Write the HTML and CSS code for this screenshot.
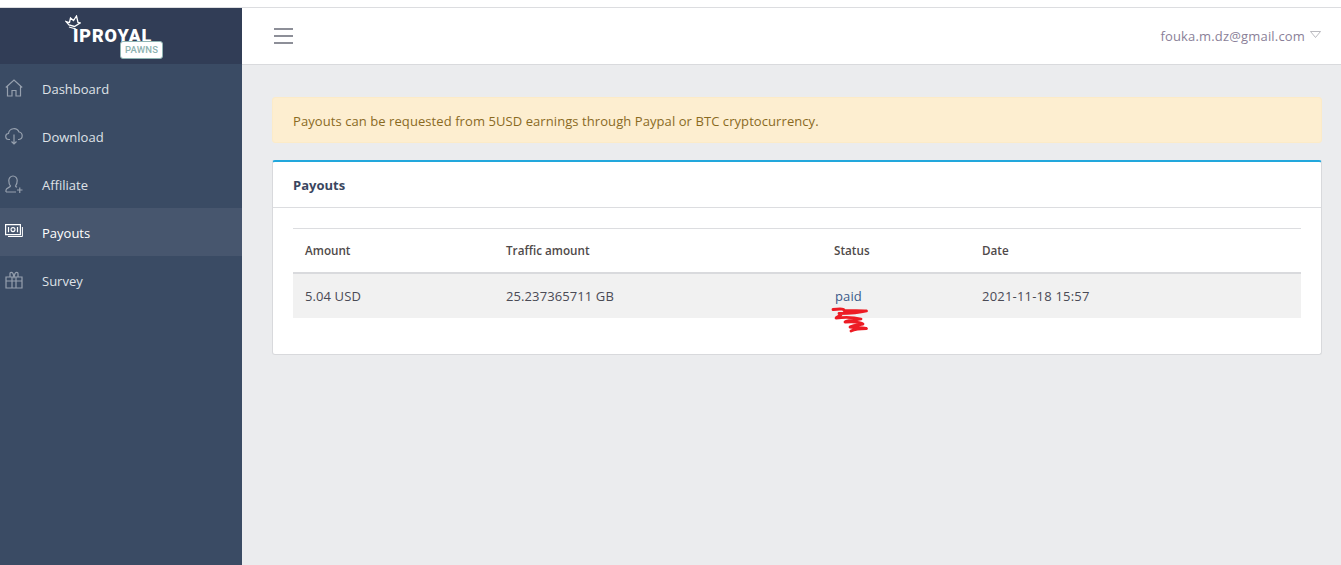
FILE: index.html
```html
<!DOCTYPE html>
<html lang="en">
<head>
<meta charset="utf-8">
<title>Payouts</title>
<link rel="stylesheet" href="styles.css">
</head>
<body>
<div class="topstrip"></div>
<div class="app">
  <aside class="sidebar">
    <div class="brand">
      <div class="logo">
        <svg class="crown" width="16" height="15" viewBox="0 0 16 15"><path d="M1 6.500 4.500 7.500 5.500 3 8.500 5.500 11.500 1 13 7.500 15 8 9.500 11.500 4 10Z" fill="none" stroke="#fff" stroke-width="1.300"/><path d="M4 12 11 14" stroke="#fff" stroke-width="1.300"/></svg>
        <span class="logotext">IPROYAL</span>
        <span class="pawns">PAWNS</span>
      </div>
    </div>
    <nav class="nav">
      <a class="navitem">
        <svg class="navicon" viewBox="0 0 18 18"><path d="M.8 8.500 9 1l8.200 7.500M2.500 7.500V17H7v-5.500h4V17h4.500V7.500" fill="none" stroke="currentColor" stroke-width="1.200"/></svg>
        <span>Dashboard</span>
      </a>
      <a class="navitem">
        <svg class="navicon" viewBox="0 0 18 18"><path d="M5 12.500H4a3 3 0 0 1-.5-6A5.500 5.500 0 0 1 14 5a3.800 3.800 0 0 1 0 7.500h-1M9 7.500v9.500M6.500 14.500 9 17l2.500-2.500" fill="none" stroke="currentColor" stroke-width="1.200"/></svg>
        <span>Download</span>
      </a>
      <a class="navitem">
        <svg class="navicon" viewBox="0 0 18 18"><path d="M1 17v-2c0-2 4-2.500 4.500-4C4 9.500 3.800 7.500 3.800 5.500 3.800 3 5.500 1 8 1s4.200 2 4.200 4.500c0 2-.5 4-1.700 5.500.2.600.8 1 1.500 1.300M1 17h10M12 15h5.500M14.750 12.500v5.500" fill="none" stroke="currentColor" stroke-width="1.200"/></svg>
        <span>Affiliate</span>
      </a>
      <a class="navitem active">
        <svg class="navicon" viewBox="0 0 18 18"><path d="M.6 1.600h14.800v10H.6z" fill="none" stroke="currentColor" stroke-width="1.200"/><path d="M17.400 4v9.500H3" fill="none" stroke="currentColor" stroke-width="1"/><circle cx="8" cy="6.600" r="2" fill="none" stroke="currentColor" stroke-width="1.100"/><path d="M3.500 4v5.200M12.500 4v5.200" stroke="currentColor" stroke-width="1.200"/></svg>
        <span>Payouts</span>
      </a>
      <a class="navitem">
        <svg class="navicon" viewBox="0 0 18 18"><path d="M1 6h16v11H1zM1 10h16M7 6v11M11 6v11M5 6V2.500C5 1 7 1 8 2.500L9 6l1-3.500C11 1 13 1 13 2.500V6" fill="none" stroke="currentColor" stroke-width="1.200"/></svg>
        <span>Survey</span>
      </a>
    </nav>
  </aside>
  <div class="content">
    <header class="topbar">
      <button class="burger" aria-label="Menu"><i></i><i></i><i></i></button>
      <div class="user">
        <span>fouka.m.dz@gmail.com</span>
        <svg width="11" height="7" viewBox="0 0 11 7"><path d="M.5.500h10L5.500 6.500Z" fill="none" stroke="#a9a9b0" stroke-width=".8"/></svg>
      </div>
    </header>
    <main class="main">
      <div class="alert">Payouts can be requested from 5USD earnings through Paypal or BTC cryptocurrency.</div>
      <section class="card">
        <h2 class="cardtitle">Payouts</h2>
        <div class="cardbody">
          <table class="table">
            <thead>
              <tr><th class="c1">Amount</th><th class="c2">Traffic amount</th><th class="c3">Status</th><th>Date</th></tr>
            </thead>
            <tbody>
              <tr>
                <td>5.04 USD</td>
                <td>25.237365711 GB</td>
                <td class="status"><span class="paid">paid</span>
                  <svg class="scribble" width="38" height="26" viewBox="0 0 38 26"><path d="M2 2.500C10 1.500 14 2 13 3.500 20 4 30 3.500 35.500 4 28 6 16 6.500 8 6.500 14 8 5 9.500 5 11 14 10 24 10.500 30 12 22 14 16 13 14 15 22 14.500 30 15 32 17 24 18.500 20 18.500 19 20 24 20.500 31 20 35.500 21.500 28 21.500 24 22 20 24" fill="none" stroke="#ed1c24" stroke-width="2.800" stroke-linecap="round" stroke-linejoin="round"/></svg>
                </td>
                <td class="date">2021-11-18 15:57</td>
              </tr>
            </tbody>
          </table>
        </div>
      </section>
    </main>
  </div>
</div>
</body>
</html>
```
FILE: styles.css
```css
* { box-sizing: border-box; }
html, body { margin: 0; height: 100%; overflow: hidden; }
body {
  font-family: "Open Sans", "Noto Sans", "Liberation Sans", sans-serif;
  font-size: 13px;
  color: #4a4a55;
  background: #fff;
  display: flex;
  flex-direction: column;
}
.topstrip { height: 8px; flex: none; background: #fff; border-bottom: 1px solid #dcdde0; }
.app { flex: 1; display: flex; min-height: 0; }

.sidebar { width: 242px; flex: none; background: #3a4b64; }
.brand { height: 56px; background: #313d56; display: flex; justify-content: center; }
.logo { position: relative; width: 100px; height: 56px; }
.crown { position: absolute; left: -6px; top: 7px; }
.logotext {
  position: absolute; left: 2px; top: 17px;
  font-family: Roboto, "Liberation Sans", sans-serif; font-weight: 900;
  font-size: 18px; line-height: 22px; color: #fff; letter-spacing: .9px;
}
.pawns {
  position: absolute; left: 49px; top: 33px; width: 43px; height: 18px;
  background: #fff; border: 1px solid #8fb5b3; border-radius: 3px;
  font-family: Roboto, "Liberation Sans", sans-serif; font-weight: 500;
  font-size: 9.500px; line-height: 16px; text-align: center; color: #8db2b0; letter-spacing: .2px;
}
.navitem {
  height: 48px; display: flex; align-items: center; gap: 19px;
  padding: 2px 0 0 5px; color: #dfe2e7; font-size: 13px;
}
.navicon { width: 18px; height: 18px; flex: none; color: #96a0ae; margin-top: -2px; }
.navitem.active { background: #47566e; color: #fff; }
.navitem.active .navicon { color: #fff; }

.content { flex: 1; min-width: 0; display: flex; flex-direction: column; background: #ebecee; }
.topbar {
  height: 57px; flex: none; background: #fff; border-bottom: 1px solid #d9dadd;
  display: flex; align-items: center; justify-content: space-between;
  padding: 0 20px 0 32px;
}
.burger { width: 19px; height: 16px; padding: 0; border: 0; background: none; display: flex; flex-direction: column; justify-content: space-between; }
.burger i { display: block; height: 2px; background: #8d8f98; }
.user { display: flex; align-items: center; gap: 5px; color: #8a7f98; font-size: 13px; letter-spacing: .17px; margin-top: -1px; }
.user svg { margin-top: -3px; }

.main { padding: 32px 19px 0 30px; }
.alert {
  height: 46px; background: #fdeed0; border: 1px solid #fcebc8; border-radius: 3px;
  padding: 2px 20px 0; display: flex; align-items: center; color: #8a6a1f; font-size: 13px; letter-spacing: .075px;
}
.card {
  margin-top: 17px; height: 195px; background: #fff;
  border: 1px solid #d8d9dc; border-top: 2px solid #22a7dc; border-radius: 3px;
}
.cardtitle {
  margin: 0; height: 46px; padding: 0 20px; display: flex; align-items: center;
  font-size: 13px; font-weight: 700; color: #3a4660; border-bottom: 1px solid #dcdde0;
}
.cardbody { padding: 20px 20px 0; }
.table { width: 100%; border-collapse: collapse; table-layout: fixed; color: #4a4a55; }
.table th {
  height: 44px; padding: 0 12px; text-align: left; font-size: 11.700px; font-weight: 600;
  border-top: 1px solid #dcdde0; border-bottom: 2px solid #d9dadd; color: #4f4a4a;
}
.table td { height: 45px; padding: 0 12px; background: #f1f1f1; font-size: 13px; letter-spacing: .1px; }
.table td.date { letter-spacing: .2px; }
.c1 { width: 201px; }
.c2 { width: 328px; }
.c3 { width: 148px; }
.status { position: relative; }
.paid { color: #3b5a8a; margin-left: 1px; }
.scribble { position: absolute; left: 9px; top: 33px; }
```
